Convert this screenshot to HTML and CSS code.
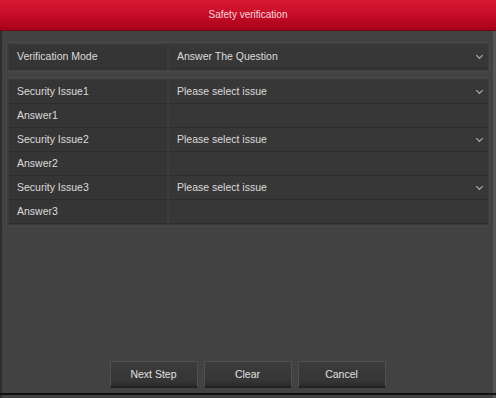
FILE: index.html
```html
<!DOCTYPE html>
<html lang="en">

<head>
    <meta charset="UTF-8">
    <title>Safety verification</title>
    <link rel="stylesheet" href="styles.css">
</head>

<body>
    <div class="dialog">
        <div class="dialog-title">Safety verification</div>
        <div class="dialog-body">
            <div class="group">
                <div class="row">
                    <div class="cell label">Verification Mode</div>
                    <div class="cell value select">Answer The Question<span class="chev"></span></div>
                </div>
            </div>
            <div class="group group-questions">
                <div class="row">
                    <div class="cell label">Security Issue1</div>
                    <div class="cell value select">Please select issue<span class="chev"></span></div>
                </div>
                <div class="row">
                    <div class="cell label">Answer1</div>
                    <div class="cell value"></div>
                </div>
                <div class="row">
                    <div class="cell label">Security Issue2</div>
                    <div class="cell value select">Please select issue<span class="chev"></span></div>
                </div>
                <div class="row">
                    <div class="cell label">Answer2</div>
                    <div class="cell value"></div>
                </div>
                <div class="row">
                    <div class="cell label">Security Issue3</div>
                    <div class="cell value select">Please select issue<span class="chev"></span></div>
                </div>
                <div class="row">
                    <div class="cell label">Answer3</div>
                    <div class="cell value"></div>
                </div>
            </div>
        </div>
        <div class="buttons">
            <button class="btn">Next Step</button>
            <button class="btn">Clear</button>
            <button class="btn">Cancel</button>
        </div>
        <div class="bottom-line"></div>
    </div>
</body>

</html>
```

FILE: styles.css
```css
body {
    margin: 0;
    padding: 0;
    font-family: 'Liberation Sans', Arial, sans-serif;
    background: #e6e6e6;
}

.dialog {
    width: 496px;
    height: 398px;
    display: flex;
    flex-direction: column;
    background: #424242;
    box-sizing: border-box;
    border-left: 2px solid #2e2e2e;
    border-right: 3px solid #555;
}

.dialog-title {
    height: 31px;
    box-sizing: border-box;
    line-height: 30px;
    text-align: center;
    color: #f4d8dc;
    font-size: 10px;
    background: linear-gradient(#d81a34, #c10a24 60%, #a80019);
    border-bottom: 1px solid #6a0a14;
    margin: 0 -3px 0 -2px;
}

.dialog-body {
    flex: 1;
    padding: 11px 3px 0 4px;
    display: flex;
    flex-direction: column;
    gap: 5px;
}

.group {
    background: #3c3c3c;
    border: 1px solid #4a4a4a;
    padding: 2px 1px 2px 2px;
    display: flex;
    flex-direction: column;
}

.row {
    display: grid;
    grid-template-columns: 158px 1fr;
    gap: 2px;
    height: 24px;
}

.cell {
    box-sizing: border-box;
    height: 24px;
    background: #353535;
    color: #dcdcdc;
    font-size: 10.5px;
    line-height: 23px;
    padding-left: 8px;
    border-bottom: 1px solid #2c2c2c;
}

.value {
    background: #373737;
    position: relative;
    padding-left: 8px;
}

.chev {
    position: absolute;
    right: 6px;
    top: 8px;
    width: 4px;
    height: 4px;
    border-right: 1.5px solid #bbb;
    border-bottom: 1.5px solid #bbb;
    transform: rotate(45deg);
}

.buttons {
    display: flex;
    justify-content: center;
    gap: 6px;
    padding: 0 0 5px 0;
}

.btn {
    width: 88px;
    height: 27px;
    font-family: 'Liberation Sans', Arial, sans-serif;
    font-size: 10.5px;
    color: #e0e0e0;
    background: linear-gradient(#3c3c3c, #353535 80%, #2a2a2a);
    border: 1px solid #505050;
    border-bottom: 2px solid #222;
    padding: 0;
}

.bottom-line {
    height: 2px;
    background: #111;
    margin: 0 -3px 3px -2px;
}
```
